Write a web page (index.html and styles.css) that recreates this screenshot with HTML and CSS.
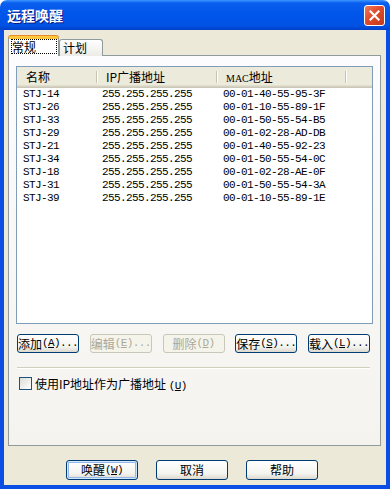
FILE: index.html
```html
<!DOCTYPE html>
<html lang="zh-CN">

<head>
    <meta charset="UTF-8">
    <title>远程唤醒</title>
    <link rel="stylesheet" href="styles.css">
</head>

<body>
    <div class="window">
        <div class="titlebar">
            <span class="title">远程唤醒</span>
            <span class="close-btn">
                <svg width="11" height="11" viewBox="0 0 11 11">
                    <path d="M1.5 1.5 L9.5 9.5 M9.5 1.5 L1.5 9.5" stroke="#fff" stroke-width="2.2" stroke-linecap="square" />
                </svg>
            </span>
        </div>

        <div class="frame">
            <div class="tabs">
                <div class="tab active"><span class="focus">常规</span></div>
                <div class="tab">计划</div>
            </div>

            <div class="panel">
                <div class="list">
                    <div class="list-head">
                        <div class="head-cell">名称</div>
                        <div class="head-cell">IP广播地址</div>
                        <div class="head-cell"><span class="small">MAC</span>地址</div>
                        <div class="head-cell last"></div>
                    </div>
                    <div class="list-body">
                        <div class="row"><span>STJ-14</span><span>255.255.255.255</span><span>00-01-40-55-95-3F</span></div>
                        <div class="row"><span>STJ-26</span><span>255.255.255.255</span><span>00-01-10-55-89-1F</span></div>
                        <div class="row"><span>STJ-33</span><span>255.255.255.255</span><span>00-01-50-55-54-B5</span></div>
                        <div class="row"><span>STJ-29</span><span>255.255.255.255</span><span>00-01-02-28-AD-DB</span></div>
                        <div class="row"><span>STJ-21</span><span>255.255.255.255</span><span>00-01-40-55-92-23</span></div>
                        <div class="row"><span>STJ-34</span><span>255.255.255.255</span><span>00-01-50-55-54-0C</span></div>
                        <div class="row"><span>STJ-18</span><span>255.255.255.255</span><span>00-01-02-28-AE-0F</span></div>
                        <div class="row"><span>STJ-31</span><span>255.255.255.255</span><span>00-01-50-55-54-3A</span></div>
                        <div class="row"><span>STJ-39</span><span>255.255.255.255</span><span>00-01-10-55-89-1E</span></div>
                    </div>
                </div>

                <div class="btn-row">
                    <button class="btn">添加<span class="mn">(<u>A</u>)...</span></button>
                    <button class="btn" disabled>编辑 <span class="mn">(<u>E</u>)...</span></button>
                    <button class="btn" disabled>删除 <span class="mn">(<u>D</u>)</span></button>
                    <button class="btn">保存<span class="mn">(<u>S</u>)...</span></button>
                    <button class="btn">载入<span class="mn">(<u>L</u>)...</span></button>
                </div>

                <div class="sep"></div>

                <label class="check-row">
                    <span class="checkbox"></span>
                    <span>使用IP地址作为广播地址 <span class="mn">(<u>U</u>)</span></span>
                </label>
            </div>

            <div class="dlg-buttons">
                <button class="btn wide default">唤醒<span class="mn">(<u>W</u>)</span></button>
                <button class="btn wide">取消</button>
                <button class="btn wide">帮助</button>
            </div>
        </div>
    </div>
</body>

</html>
```

FILE: styles.css
```css
body {
    margin: 0;
    background: #fff;
    font-family: "Noto Sans CJK SC", sans-serif;
    font-size: 12px;
    color: #000;
}

.window {
    width: 390px;
    height: 489px;
    display: flex;
    flex-direction: column;
}

.titlebar {
    height: 30px;
    flex: none;
    display: flex;
    align-items: center;
    padding: 0 5px 0 7px;
    border-radius: 7px 7px 0 0;
    background: linear-gradient(#3D95FF 0, #0A5FEF 3px, #0055EA 50%, #0052E4 85%, #0040C8 100%);
}

.title {
    flex: 1;
    color: #fff;
    font-weight: bold;
    font-size: 14px;
    text-shadow: 1px 1px #0A1883;
}

.close-btn {
    width: 21px;
    height: 21px;
    box-sizing: border-box;
    border: 1px solid #fff;
    border-radius: 3px;
    background: linear-gradient(135deg, #EE7A5C 0%, #E04A2B 45%, #C23A1C 100%);
    display: flex;
    align-items: center;
    justify-content: center;
}

.frame {
    flex: 1;
    background: #ECE9D8;
    border: 4px solid #0A4EE4;
    border-top: none;
    box-shadow: inset 0 0 0 0 #000;
}

/* tabs */
.tabs {
    display: flex;
    align-items: flex-end;
    height: 20px;
    margin: 6px 0 0 4px;
}

.tab {
    height: 17px;
    width: 44px;
    box-sizing: border-box;
    padding: 0 0 0 3px;
    border: 1px solid #919B9C;
    border-bottom: none;
    border-radius: 3px 3px 0 0;
    background: linear-gradient(#FFFFFF, #ECEBE6);
    line-height: 15px;
}

.tab.active {
    height: 20px;
    width: 51px;
    padding: 0 0 0 2px;
    background: #fff;
    border-top: 3px solid #FFC83C;
    box-shadow: 0 -1px 0 #E68B2C;
    position: relative;
    z-index: 1;
}

.focus {
    display: block;
    width: 46px;
    height: 15px;
    box-sizing: border-box;
    border: 1px dotted #000;
    padding-left: 0;
    line-height: 13px;
}

.panel {
    margin: -1px 0 0 4px;
    width: 373px;
    height: 391px;
    box-sizing: border-box;
    border: 1px solid #919B9C;
    background: linear-gradient(#FCFCFE, #F4F3EE);
    padding: 10px 0 0 7px;
}

/* list view */
.list {
    width: 357px;
    height: 258px;
    box-sizing: border-box;
    border: 1px solid #7F9DB9;
    background: #fff;
}

.list-head,
.row {
    display: grid;
    grid-template-columns: 80px 120px 129px 1fr;
}

.list-head {
    height: 21px;
    background: #EBEADB;
    box-shadow: inset 0 -1px #CBC7B8, inset 0 -2px #D6D2C2, inset 0 -3px #E2DECD;
}

.head-cell {
    position: relative;
    padding-left: 9px;
    line-height: 19px;
}

.head-cell::after {
    content: "";
    position: absolute;
    right: 0;
    top: 4px;
    height: 12px;
    width: 1px;
    background: #C7C5B2;
    box-shadow: 1px 0 #fff;
}

.head-cell.last::after {
    display: none;
}

.small {
    font-family: "Liberation Serif", serif;
    font-size: 10px;
}

.row {
    height: 13px;
    line-height: 13px;
    font-family: "Liberation Mono", monospace;
    font-size: 11px;
    letter-spacing: -0.6px;
}

.row span {
    padding-left: 6px;
}

.row span:nth-child(2) {
    padding-left: 5px;
}

/* buttons */
.btn-row {
    display: flex;
    justify-content: space-between;
    width: 353px;
    margin: 10px 0 0 1px;
}

.btn {
    width: 62px;
    height: 19px;
    box-sizing: border-box;
    padding: 0;
    border: 1px solid #003C74;
    border-radius: 3px;
    background: linear-gradient(#FFFFFF, #F3F3EF 70%, #DCD8CC);
    font-family: "Noto Sans CJK SC", sans-serif;
    font-size: 12px;
    color: #000;
    display: flex;
    align-items: center;
    justify-content: center;
    white-space: nowrap;
    line-height: 1;
}

.btn:disabled {
    border-color: #C9C7BA;
    background: #F5F4EA;
    color: #ACA899;
}

.mn {
    font-family: "Liberation Mono", monospace;
    font-size: 11px;
    letter-spacing: -0.6px;
}

.sep {
    width: 353px;
    margin: 14px 0 0 1px;
    border-top: 1px solid #D0D0BF;
    border-bottom: 1px solid #fff;
}

.check-row {
    display: flex;
    align-items: center;
    margin: 7px 0 0 3px;
    height: 14px;
}

.checkbox {
    width: 13px;
    height: 13px;
    box-sizing: border-box;
    border: 1px solid #1C5180;
    background: linear-gradient(135deg, #DCDCD7, #FFFFFF);
    margin-right: 3px;
}

.dlg-buttons {
    display: flex;
    gap: 18px;
    padding-left: 62px;
    margin-top: 14px;
}

.btn.wide {
    width: 72px;
    height: 20px;
}

.btn.default {
    box-shadow: inset 0 0 0 1px #CEE7FF, inset 0 0 0 2px #98B8EA;
}
```
